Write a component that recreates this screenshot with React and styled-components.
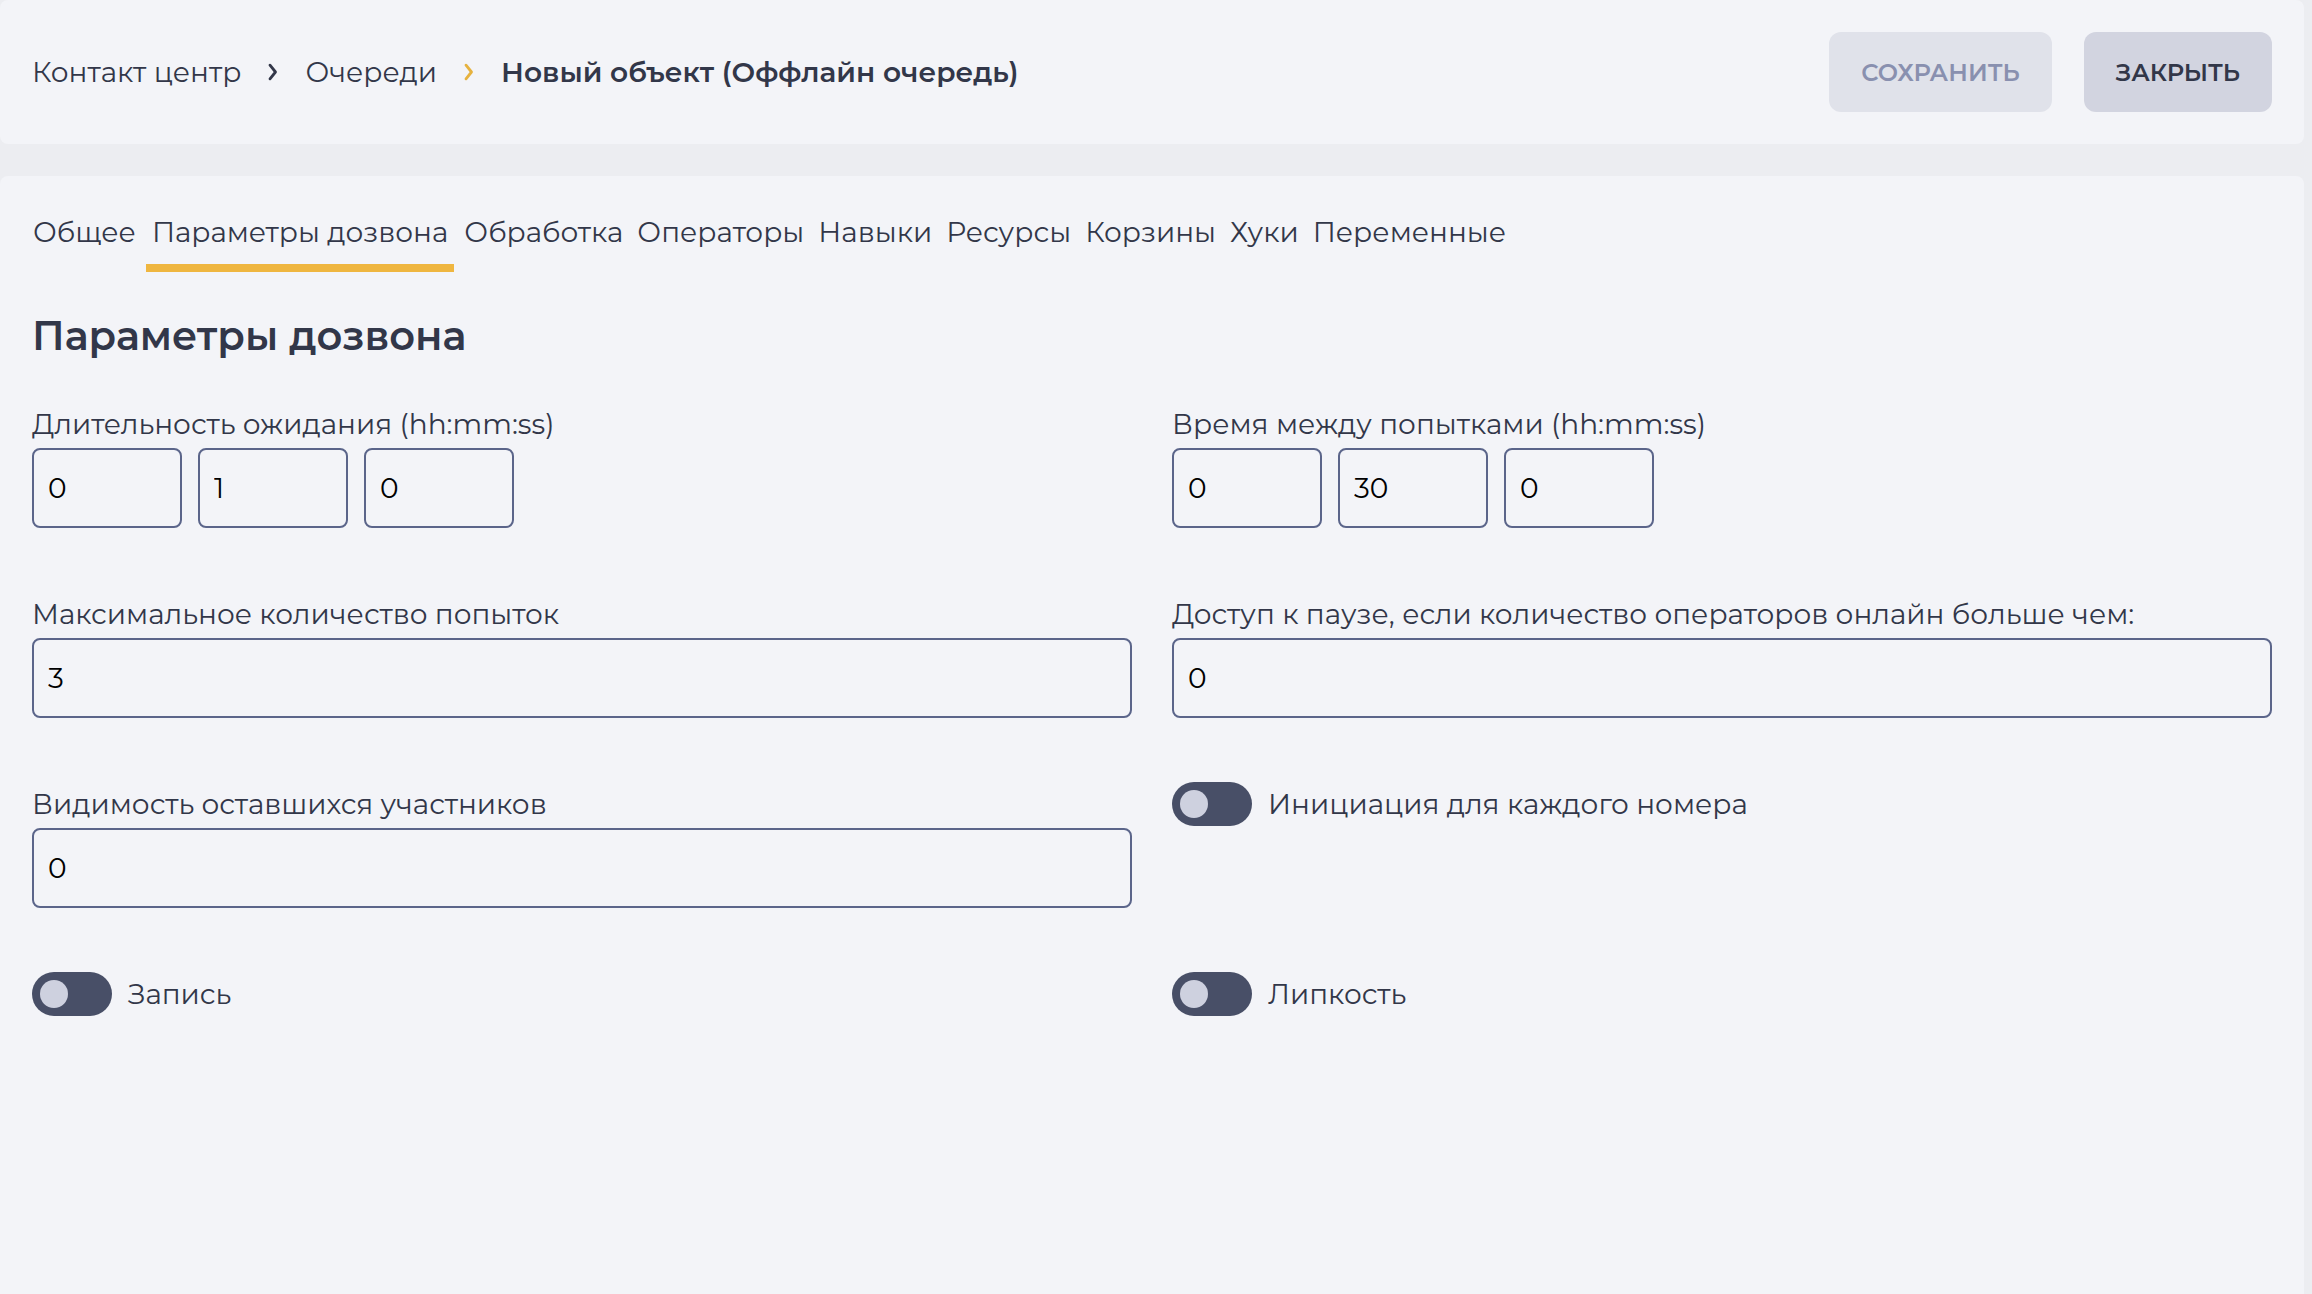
import { useState } from 'react'
import styled, { createGlobalStyle } from 'styled-components'

const GlobalStyle = createGlobalStyle`
  * {
    box-sizing: border-box;
  }

  body {
    margin: 0;
    background: #ecedf1;
    color: #323749;
    font-family: Montserrat, Inter, 'Noto Sans', sans-serif;
    font-size: 28px;
    line-height: 44px;
  }
`

const Page = styled.div`
  display: flex;
  flex-direction: column;
  gap: 32px;
  min-height: 100vh;
  padding-right: 8px;
`

const Header = styled.header`
  display: flex;
  align-items: center;
  justify-content: space-between;
  padding: 32px;
  background: #f3f4f8;
  border-radius: 8px;
`

const Breadcrumbs = styled.nav`
  display: flex;
  align-items: center;
  gap: 26px;
`

const Crumb = styled.a`
  color: inherit;
  text-decoration: none;
`

const CurrentCrumb = styled.span`
  font-weight: 600;
`

const ChevronIcon = styled.svg`
  width: 12px;
  height: 18px;
  fill: none;
  stroke: ${({ $active }) => ($active ? '#e6b23f' : '#323749')};
  stroke-width: 2.8;
  stroke-linecap: round;
  stroke-linejoin: round;
`

const Actions = styled.div`
  display: flex;
  gap: 32px;
`

const Button = styled.button`
  height: 80px;
  padding: 0 32px;
  border: none;
  border-radius: 12px;
  background: #d2d4e0;
  color: #323749;
  font-family: inherit;
  font-size: 24px;
  font-weight: 600;
  text-transform: uppercase;
  cursor: pointer;

  &:disabled {
    background: #e0e2ea;
    color: #8990af;
    cursor: default;
  }
`

const Main = styled.main`
  flex: 1;
  padding: 32px;
  background: #f3f4f8;
  border-radius: 8px 8px 0 0;
`

const Tabs = styled.div`
  display: flex;
  gap: 2px;
  margin: 0 -5px;
`

const Tab = styled.button`
  height: 64px;
  margin: ${({ $active }) => ($active ? '0 2px' : '0')};
  padding: 0 6px 8px;
  border: none;
  border-bottom: 8px solid ${({ $active }) => ($active ? '#efb640' : 'transparent')};
  background: none;
  color: inherit;
  font: inherit;
  line-height: 48px;
  white-space: nowrap;
  cursor: pointer;
`

const Title = styled.h1`
  margin: 40px 0 42px;
  font-size: 40px;
  font-weight: 600;
  line-height: 48px;
`

const Form = styled.form`
  display: grid;
  grid-template-columns: 1fr 1fr;
  gap: 64px 40px;
`

const Field = styled.div`
  display: flex;
  flex-direction: column;
  gap: 2px;
`

const Label = styled.label`
  line-height: 44px;
`

const Input = styled.input`
  width: ${({ $short }) => ($short ? '150px' : '100%')};
  height: 80px;
  padding: 0 14px;
  border: 2px solid #5b658a;
  border-radius: 8px;
  background: transparent;
  color: #000;
  font: inherit;
`

const TimeGroup = styled.div`
  display: flex;
  gap: 16px;
`

const SwitchLabel = styled.label`
  display: flex;
  align-items: center;
  align-self: start;
  gap: 16px;
  cursor: pointer;
`

const Switch = styled.input`
  appearance: none;
  display: flex;
  flex: none;
  width: 80px;
  height: 44px;
  margin: 0;
  padding: 8px;
  border-radius: 22px;
  background: #484f67;
  cursor: pointer;

  &::before {
    content: '';
    width: 28px;
    height: 28px;
    border-radius: 50%;
    background: #ced1df;
  }

  &:checked {
    justify-content: flex-end;
    background: #efb640;
  }
`

const tabs = [
  'Общее',
  'Параметры дозвона',
  'Обработка',
  'Операторы',
  'Навыки',
  'Ресурсы',
  'Корзины',
  'Хуки',
  'Переменные',
]

function Chevron({ active }) {
  return (
    <ChevronIcon $active={active} viewBox="0 0 12 18" aria-hidden="true">
      <path d="M3 2.2L8.5 9L3 15.8" />
    </ChevronIcon>
  )
}

function TextField({ id, label, value }) {
  return (
    <Field>
      <Label htmlFor={id}>{label}</Label>
      <Input id={id} defaultValue={value} />
    </Field>
  )
}

function TimeField({ id, label, values }) {
  return (
    <Field>
      <Label htmlFor={`${id}-0`}>{label}</Label>
      <TimeGroup>
        {values.map((value, i) => (
          <Input $short key={i} id={`${id}-${i}`} aria-label={['hh', 'mm', 'ss'][i]} defaultValue={value} />
        ))}
      </TimeGroup>
    </Field>
  )
}

function SwitchField({ label }) {
  return (
    <SwitchLabel>
      <Switch type="checkbox" role="switch" />
      {label}
    </SwitchLabel>
  )
}

function App() {
  const [current, setCurrent] = useState('Параметры дозвона')

  return (
    <>
      <GlobalStyle />
      <Page>
        <Header>
          <Breadcrumbs>
            <Crumb href="#contact-center">Контакт центр</Crumb>
            <Chevron />
            <Crumb href="#queues">Очереди</Crumb>
            <Chevron active />
            <CurrentCrumb>Новый объект (Оффлайн очередь)</CurrentCrumb>
          </Breadcrumbs>
          <Actions>
            <Button disabled>Сохранить</Button>
            <Button>Закрыть</Button>
          </Actions>
        </Header>
        <Main>
          <Tabs role="tablist">
            {tabs.map((tab) => (
              <Tab
                key={tab}
                role="tab"
                aria-selected={tab === current}
                $active={tab === current}
                onClick={() => setCurrent(tab)}
              >
                {tab}
              </Tab>
            ))}
          </Tabs>
          <Title>Параметры дозвона</Title>
          <Form>
            <TimeField id="wait" label="Длительность ожидания (hh:mm:ss)" values={[0, 1, 0]} />
            <TimeField id="retry" label="Время между попытками (hh:mm:ss)" values={[0, 30, 0]} />
            <TextField id="attempts" label="Максимальное количество попыток" value={3} />
            <TextField id="pause" label="Доступ к паузе, если количество операторов онлайн больше чем:" value={0} />
            <TextField id="members" label="Видимость оставшихся участников" value={0} />
            <SwitchField label="Инициация для каждого номера" />
            <SwitchField label="Запись" />
            <SwitchField label="Липкость" />
          </Form>
        </Main>
      </Page>
    </>
  )
}

export default App
